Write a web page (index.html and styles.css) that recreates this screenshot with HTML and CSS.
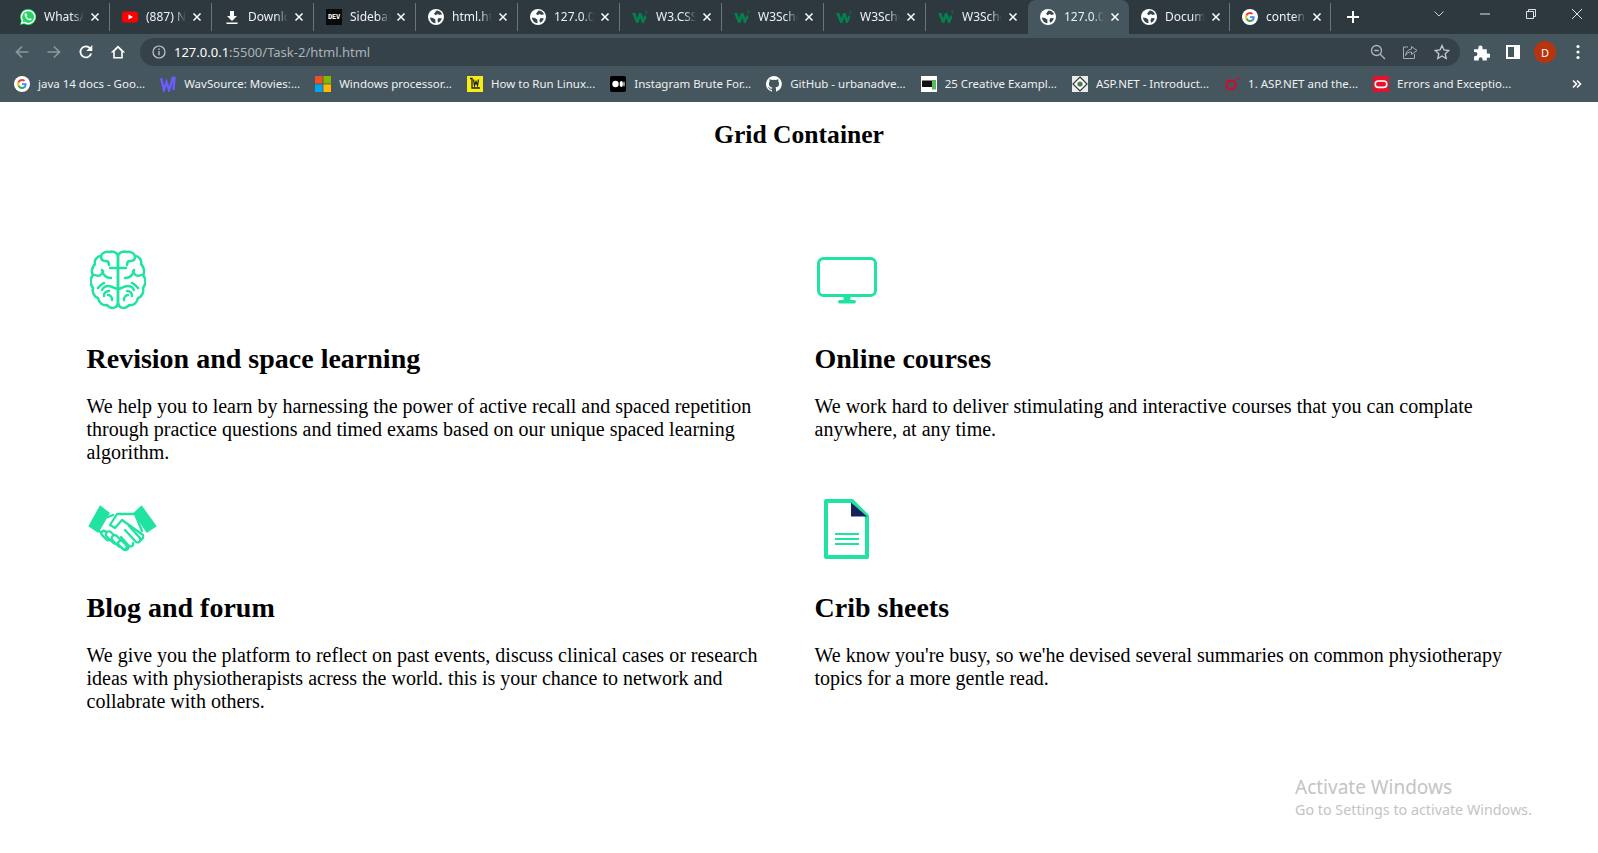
FILE: index.html
```html
<!DOCTYPE html>
<html lang="en">
<head>
<meta charset="utf-8">
<title>Grid Container</title>
<link rel="stylesheet" href="styles.css">
</head>
<body>
<svg class="defs" width="0" height="0" aria-hidden="true">
  <defs>
    <symbol id="globe" viewBox="0 0 16 16">
      <circle cx="8" cy="8" r="8" fill="#fff"/>
      <path d="M8.500 1.500c2.500 0 4.700 1.500 5.600 3.800L11.500 6 9.800 5 7.600 6.300 6 4.800zM2 8.500l3 .4 2.300 1.500.2 3.800C4.500 14.200 2.300 11.700 2 8.500zM10.500 9l3.200.2c-.4 2-1.700 3.700-3.500 4.500l-.8-2.500z" fill="#38464e"/>
    </symbol>
    <symbol id="google" viewBox="0 0 16 16">
      <circle cx="8" cy="8" r="8" fill="#fff"/>
      <path d="M12.600 8.200c0-.4 0-.7-.1-1H8v1.900h2.600c-.1.7-.5 1.200-1 1.600l1.600 1.200c.9-.9 1.400-2.200 1.400-3.700z" fill="#4285f4"/>
      <path d="M8 13c1.300 0 2.400-.4 3.200-1.200l-1.600-1.200c-.4.300-1 .5-1.600.5-1.300 0-2.300-.8-2.700-2L3.700 10.300C4.500 11.900 6.100 13 8 13z" fill="#34a853"/>
      <path d="M5.300 9.100c-.2-.7-.2-1.400 0-2.100L3.700 5.700c-.7 1.400-.7 3.200 0 4.600z" fill="#fbbc05"/>
      <path d="M8 4.900c.7 0 1.300.2 1.800.7l1.400-1.400C10.300 3.400 9.200 3 8 3 6.100 3 4.500 4.100 3.700 5.700L5.300 7c.4-1.200 1.400-2.100 2.700-2.100z" fill="#ea4335"/>
    </symbol>
    <symbol id="w3" viewBox="0 0 16 16">
      <path d="M0 4h3.500l1.500 5.500L7 4h2.400l2 5.500L12.500 6l2 2-2.700 6H10L8.200 8.800 6.300 14H4.200z" fill="#04804f"/>
      <path d="M13 2.200h2.200L14 3.500c.9.100 1.200 1.600-.3 2" fill="none" stroke="#04804f" stroke-width=".7"/>
    </symbol>
    <symbol id="close" viewBox="0 0 10 10">
      <path d="M1.500 1.500l7 7M8.500 1.500l-7 7" stroke="#fff" stroke-width="1.500" fill="none"/>
    </symbol>
  </defs>
</svg>

<header class="browser">
  <div class="strip">
    <div class="tab">
      <svg class="fav" viewBox="0 0 16 16"><path d="M8 0a8 8 0 0 0-6.900 12L0 16l4.100-1.100A8 8 0 1 0 8 0z" fill="#25d366"/><path d="M8 1.500a6.500 6.500 0 0 0-5.500 9.900l-.7 2.700 2.800-.7A6.500 6.500 0 1 0 8 1.500z" fill="#25d366" stroke="#fff" stroke-width="1.300"/><path d="M5.500 4.300c-.8.500-1.200 1.500-.6 2.900.8 1.900 2.400 3.600 4.300 4.100 1.300.4 2.300-.4 2.400-1.300l-1.600-.9-.9.800c-1-.4-2-1.400-2.500-2.500l.7-.8-.8-2z" fill="#fff"/></svg>
      <span class="tab-title">WhatsApp</span><svg class="x"><use href="#close"/></svg>
    </div>
    <div class="tab">
      <svg class="fav" viewBox="0 0 16 16"><rect y="2.500" width="16" height="11" rx="3" fill="#f00"/><path d="M6.500 5.500v5L11 8z" fill="#fff"/></svg>
      <span class="tab-title">(887) Netflix</span><svg class="x"><use href="#close"/></svg>
    </div>
    <div class="tab">
      <svg class="fav" viewBox="0 0 16 16"><path d="M6 2h4v5h3l-5 5-5-5h3zM2.500 13.500h11v1.500h-11z" fill="#fff"/></svg>
      <span class="tab-title">Downloads</span><svg class="x"><use href="#close"/></svg>
    </div>
    <div class="tab">
      <svg class="fav" viewBox="0 0 16 16"><rect width="16" height="16" fill="#0a0a0a"/></svg>
      <span class="dev">DEV</span>
      <span class="tab-title">Sidebar</span><svg class="x"><use href="#close"/></svg>
    </div>
    <div class="tab">
      <svg class="fav"><use href="#globe"/></svg>
      <span class="tab-title">html.html</span><svg class="x"><use href="#close"/></svg>
    </div>
    <div class="tab">
      <svg class="fav"><use href="#globe"/></svg>
      <span class="tab-title">127.0.0.1</span><svg class="x"><use href="#close"/></svg>
    </div>
    <div class="tab">
      <svg class="fav"><use href="#w3"/></svg>
      <span class="tab-title">W3.CSS</span><svg class="x"><use href="#close"/></svg>
    </div>
    <div class="tab">
      <svg class="fav"><use href="#w3"/></svg>
      <span class="tab-title">W3Schools</span><svg class="x"><use href="#close"/></svg>
    </div>
    <div class="tab">
      <svg class="fav"><use href="#w3"/></svg>
      <span class="tab-title">W3Schools</span><svg class="x"><use href="#close"/></svg>
    </div>
    <div class="tab before-active">
      <svg class="fav"><use href="#w3"/></svg>
      <span class="tab-title">W3Schools</span><svg class="x"><use href="#close"/></svg>
    </div>
    <div class="tab active narrow">
      <svg class="fav"><use href="#globe"/></svg>
      <span class="tab-title">127.0.0.1</span><svg class="x"><use href="#close"/></svg>
    </div>
    <div class="tab narrow">
      <svg class="fav"><use href="#globe"/></svg>
      <span class="tab-title">Document</span><svg class="x"><use href="#close"/></svg>
    </div>
    <div class="tab narrow">
      <svg class="fav"><use href="#google"/></svg>
      <span class="tab-title">content</span><svg class="x"><use href="#close"/></svg>
    </div>
    <svg class="newtab" viewBox="0 0 14 14"><path d="M7 1v12M1 7h12" stroke="#fff" stroke-width="2" fill="none"/></svg>
    <div class="win">
      <svg class="win-ico" viewBox="0 0 12 12"><path d="M1.500 3.500L6 8l4.500-4.500" stroke="#c9d0d4" fill="none"/></svg>
      <svg class="win-ico" viewBox="0 0 12 12"><path d="M1 6h10" stroke="#dfe3e5" fill="none"/></svg>
      <svg class="win-ico" viewBox="0 0 12 12"><path d="M1.500 3.500h7v7h-7zM3.500 3.500v-2h7v7h-2" stroke="#dfe3e5" fill="none"/></svg>
      <svg class="win-ico" viewBox="0 0 12 12"><path d="M1 1l10 10M11 1L1 11" stroke="#dfe3e5" fill="none"/></svg>
    </div>
  </div>

  <div class="toolbar">
    <svg class="nav" viewBox="0 0 16 16"><path d="M14.500 8H2.500M8 2.500L2.500 8 8 13.500" stroke="#8e999f" stroke-width="1.700" fill="none"/></svg>
    <svg class="nav" viewBox="0 0 16 16"><path d="M1.500 8h12M8 2.500L13.500 8 8 13.500" stroke="#8e999f" stroke-width="1.700" fill="none"/></svg>
    <svg class="nav" viewBox="0 0 16 16"><path d="M13.200 9.500A5.500 5.500 0 1 1 12 4.200" stroke="#fff" stroke-width="1.800" fill="none"/><path d="M14.300 1v6h-6z" fill="#fff"/></svg>
    <svg class="nav" viewBox="0 0 16 16"><path d="M8 1.500L.8 8.500h2.400v6h9.600v-6h2.400zM4.800 13V7.300L8 4l3.200 3.300V13z" fill="#fff"/></svg>
    <div class="omni">
      <svg class="info" viewBox="0 0 14 14"><circle cx="7" cy="7" r="6" stroke="#c3cacd" stroke-width="1.200" fill="none"/><path d="M7 6v4.200M7 3.500v1.400" stroke="#c3cacd" stroke-width="1.300"/></svg>
      <span class="url"><span class="host">127.0.0.1</span>:5500/Task-2/html.html</span>
      <svg class="omni-ico" viewBox="0 0 16 16"><circle cx="6.500" cy="6.500" r="5" stroke="#aeb6bb" stroke-width="1.300" fill="none"/><path d="M10.200 10.200l4.800 4.800M4.200 6.500h4.600" stroke="#aeb6bb" stroke-width="1.300"/></svg>
      <svg class="omni-ico" viewBox="0 0 16 16"><path d="M6 3H1.500v11.500h11V10M9.500 2.500L15 6.500l-5.500 4V8c-3 0-4.500 1-6 3.500C4 8 6 5.500 9.500 5z" stroke="#a3adb2" stroke-width="1" fill="none"/></svg>
      <svg class="omni-ico" viewBox="0 0 16 16"><path d="M8 1.500l2 4.500 4.800.5-3.600 3.200 1 4.800L8 12l-4.200 2.500 1-4.800L1.200 6.500 6 6z" stroke="#c3cacd" stroke-width="1.300" fill="none"/></svg>
    </div>
    <svg class="ext" viewBox="0 0 16 16"><path d="M1 5h4V3.500a2 2 0 0 1 4 0V5h4v4h1.500a2 2 0 0 1 0 4H13v2.500H9v-1.200a1.800 1.800 0 0 0-3.600 0v1.200H1v-4h1.200a2 2 0 0 0 0-4H1z" fill="#fff"/></svg>
    <svg class="panel" viewBox="0 0 14 14"><path d="M0 0h14v14H0z" fill="#fff"/><path d="M2 2h6v10H2z" fill="#46565f"/></svg>
    <span class="avatar">D</span>
    <svg class="dots" viewBox="0 0 4 16"><circle cx="2" cy="2.500" r="1.600" fill="#fff"/><circle cx="2" cy="8" r="1.600" fill="#fff"/><circle cx="2" cy="13.500" r="1.600" fill="#fff"/></svg>
  </div>

  <nav class="bookmarks">
    <a class="bm"><svg class="fav"><use href="#google"/></svg><span class="bm-text">java 14 docs - Goo...</span></a>
    <a class="bm"><svg class="fav" viewBox="0 0 16 16"><path d="M1 2l3 12 2.500-8L9 14l3-9 .5-3 2 0-1 12" stroke="#6a5cff" stroke-width="2.400" fill="none"/></svg><span class="bm-text">WavSource: Movies:...</span></a>
    <a class="bm"><svg class="fav" viewBox="0 0 16 16"><path d="M0 0h7.600v7.600H0z" fill="#f25022"/><path d="M8.400 0H16v7.600H8.400z" fill="#7fba00"/><path d="M0 8.400h7.600V16H0z" fill="#00a4ef"/><path d="M8.400 8.400H16V16H8.400z" fill="#ffb900"/></svg><span class="bm-text">Windows processor...</span></a>
    <a class="bm"><svg class="fav" viewBox="0 0 16 16"><rect width="16" height="16" fill="#f7ec13"/><path d="M3 2.500h2v9.500h8M6.500 3.500l1 6 1.500-4 1.500 4 1-6" stroke="#222" stroke-width="1.300" fill="none"/></svg><span class="bm-text">How to Run Linux...</span></a>
    <a class="bm"><svg class="fav" viewBox="0 0 16 16"><rect width="16" height="16" rx="2" fill="#000"/><circle cx="5.500" cy="8" r="3.200" fill="#fff"/><ellipse cx="11.300" cy="8" rx="1.600" ry="3" fill="#fff"/><ellipse cx="14" cy="8" rx=".6" ry="2.700" fill="#fff"/></svg><span class="bm-text">Instagram Brute For...</span></a>
    <a class="bm"><svg class="fav" viewBox="0 0 16 16"><path d="M8 0a8 8 0 0 0-2.500 15.600c.4.100.5-.2.500-.4v-1.400c-2.200.5-2.700-1-2.700-1-.4-.9-.9-1.200-.9-1.200-.7-.5.100-.5.100-.5.800.100 1.200.8 1.200.8.700 1.200 1.900.9 2.300.7.100-.5.300-.9.500-1.100-1.800-.2-3.600-.9-3.600-4 0-.9.300-1.600.8-2.100-.1-.2-.4-1 .1-2.100 0 0 .7-.2 2.200.8a7.600 7.600 0 0 1 4 0c1.500-1 2.200-.8 2.200-.8.500 1.100.2 1.900.1 2.100.5.600.8 1.300.8 2.100 0 3.100-1.900 3.700-3.700 3.900.3.300.6.800.6 1.500v2.200c0 .2.100.5.600.4A8 8 0 0 0 8 0z" fill="#fff"/></svg><span class="bm-text">GitHub - urbanadve...</span></a>
    <a class="bm"><svg class="fav" viewBox="0 0 16 16"><rect width="16" height="16" fill="#fff"/><rect x="1" y="4.500" width="14" height="6.500" fill="#111"/><rect x="11" y="4.500" width="4" height="9" fill="#5cb85c"/></svg><span class="bm-text">25 Creative Exampl...</span></a>
    <a class="bm"><svg class="fav" viewBox="0 0 16 16"><rect width="16" height="16" fill="#e9ecec"/><path d="M8 1l7 7-7 7-7-7z" fill="#fff" stroke="#333" stroke-width="1.200"/><circle cx="8" cy="8" r="2.600" fill="#4b7a4b"/></svg><span class="bm-text">ASP.NET - Introduct...</span></a>
    <a class="bm"><svg class="fav" viewBox="0 0 16 16"><circle cx="7" cy="9" r="4.500" stroke="#c8102e" stroke-width="2.400" fill="none"/><circle cx="14" cy="3" r="1.300" fill="#c8102e"/></svg><span class="bm-text">1. ASP.NET and the...</span></a>
    <a class="bm"><svg class="fav" viewBox="0 0 16 16"><rect width="16" height="16" fill="#e8112d"/><rect x="2.200" y="5" width="11.600" height="6.400" rx="3.200" stroke="#fff" stroke-width="1.600" fill="none"/></svg><span class="bm-text">Errors and Exceptio...</span></a>
    <svg class="more" viewBox="0 0 10 10"><path d="M1 1.500L4.500 5 1 8.500M5 1.500L8.500 5 5 8.500" stroke="#fff" stroke-width="1.600" fill="none"/></svg>
  </nav>
</header>

<main class="page">
  <h1 class="page-title">Grid Container</h1>
  <section class="grid">
    <article class="card">
      <div class="icon-box">
        <svg class="brain" viewBox="0 0 56 60">
          <g id="half" fill="none" stroke="#20e3a2" stroke-width="2.500" stroke-linecap="round" stroke-linejoin="round">
            <path d="M28 5C26 2 22 1 19 2C16 1 12 3 11 6C7 6 4 10 5 14C2 17 1 22 3 25C0 29 0 34 3 38C2 42 4 47 8 48C9 53 13 56 17 55C20 59 26 59 28 54"/>
            <path d="M28 5V54M28 18H20M28 39C25 39 23 36 18 36C15 36 13 38 12 40M5 25C9 27 12 25 13 21M16 11C18 11 19 13 19 15M11 6C11 9 12 11 15 11M12 20C13 25 16 28 21 28M14 46C14 43 16 41 19 41M22 50C22 47 20 45 18 45M8 38C10 36 11 34 14 33"/>
          </g>
          <use href="#half" transform="matrix(-1 0 0 1 56 0)"/>
        </svg>
      </div>
      <h2 class="card-title">Revision and space learning</h2>
      <p class="card-text">We help you to learn by harnessing the power of active recall and spaced repetition through practice questions and timed exams based on our unique spaced learning algorithm.</p>
    </article>
    <article class="card">
      <div class="icon-box">
        <svg class="monitor" viewBox="0 0 60 47">
          <rect x="1.500" y="1.500" width="57" height="37" rx="5" fill="none" stroke="#20e3a2" stroke-width="3"/>
          <path d="M26.500 39h7v4h-7z" fill="#20e3a2"/>
          <rect x="21" y="43" width="18" height="3.500" rx="1.700" fill="#20e3a2"/>
        </svg>
      </div>
      <h2 class="card-title">Online courses</h2>
      <p class="card-text">We work hard to deliver stimulating and interactive courses that you can complate anywhere, at any time.</p>
    </article>
    <article class="card">
      <div class="icon-box">
        <svg class="hands" viewBox="0 0 69 49">
          <g fill="none" stroke="#20e3a2" stroke-width="2.300" stroke-linecap="round" stroke-linejoin="round">
            <path d="M20 12L25 10M46 9H29L22 20L27 23L34 15L55 30C56 33 54 35 52 35"/>
            <path d="M47 9L54 26M11 26L14 28"/>
            <path d="M41 21L53 34C53 37 50 38 48 37L37 25M45 38C46 41 43 42 41 41L33 32M41 42C40 45 37 46 35 44L31 40"/>
            <rect x="15.500" y="25" width="5" height="11" rx="2.500" transform="rotate(-45 18 30.500)" fill="#fff"/>
            <rect x="21" y="25" width="6" height="15" rx="3" transform="rotate(-45 24 32.500)" fill="#fff"/>
            <rect x="26.500" y="29" width="6" height="14" rx="3" transform="rotate(-45 29.500 36)" fill="#fff"/>
            <rect x="32" y="35" width="5" height="10" rx="2.500" transform="rotate(-45 34.500 40)" fill="#fff"/>
          </g>
          <path d="M12 .3L22 8 10.300 28 .3 21.300zM53.700 .3L68.700 21.300 58.700 28 45.300 8z" fill="#20e3a2"/>
        </svg>
      </div>
      <h2 class="card-title">Blog and forum</h2>
      <p class="card-text">We give you the platform to reflect on past events, discuss clinical cases or research ideas with physiotherapists acress the world. this is your chance to network and collabrate with others.</p>
    </article>
    <article class="card">
      <div class="icon-box">
        <svg class="doc" viewBox="0 0 45 60">
          <path d="M28 2H2v56h41V17z" fill="none" stroke="#20e3a2" stroke-width="4" stroke-linejoin="round"/>
          <path d="M27 3.500L43 17.500H27z" fill="#1a1f5e"/>
          <path d="M11 35h24M11 40h24M11 45h24" stroke="#20e3a2" stroke-width="2"/>
        </svg>
      </div>
      <h2 class="card-title">Crib sheets</h2>
      <p class="card-text">We know you're busy, so we'he devised several summaries on common physiotherapy topics for a more gentle read.</p>
    </article>
  </section>
</main>

<aside class="activate">
  <div class="activate-head">Activate Windows</div>
  <div class="activate-sub">Go to Settings to activate Windows.</div>
</aside>
</body>
</html>
```

FILE: styles.css
```css
* { box-sizing: border-box; }
html, body { margin: 0; padding: 0; }
body {
  width: 1598px;
  height: 853px;
  overflow: hidden;
  background: #fff;
  color: #000;
  font-family: "Liberation Serif", "Times New Roman", serif;
  position: relative;
}
.defs { position: absolute; }

.browser { font-family: "Noto Sans", "Open Sans", sans-serif; color: #fff; }

.strip {
  height: 34px;
  background: #2e383f;
  padding-left: 8px;
  display: flex;
  align-items: stretch;
}
.tab {
  width: 102px;
  display: flex;
  align-items: center;
  padding-left: 12px;
  font-size: 12px;
  position: relative;
  border-right: 1px solid #6a7479;
  height: 28px;
  align-self: center;
}
.tab.narrow { width: 101px; }
.tab.before-active { border-right-color: transparent; }
.tab.active {
  height: 34px;
  background: #46565f;
  border-right-color: transparent;
  border-radius: 8px 8px 0 0;
  align-self: flex-end;
}
.fav { width: 16px; height: 16px; flex: none; }
.dev {
  position: absolute;
  left: 12px;
  width: 16px;
  text-align: center;
  font: bold 7px "DejaVu Sans Mono", monospace;
  letter-spacing: -.2px;
}
.tab-title {
  margin-left: 8px;
  padding-bottom: 2px;
  width: 40px;
  white-space: nowrap;
  overflow: hidden;
  -webkit-mask-image: linear-gradient(to right, #000 70%, transparent);
  mask-image: linear-gradient(to right, #000 70%, transparent);
  color: #eef1f2;
}
.x { width: 10px; height: 10px; margin-left: 6px; flex: none; }
.newtab { width: 14px; height: 14px; margin: 10px 0 0 15px; }
.win {
  margin-left: auto;
  display: flex;
  height: 28px;
  align-items: center;
  padding-right: 15px;
  gap: 34px;
}
.win-ico { width: 12px; height: 12px; }

.toolbar {
  height: 32px;
  background: #46565f;
  padding: 4px 11px 0 14px;
  display: flex;
  align-items: center;
}
.nav { width: 16px; height: 16px; margin-right: 16px; flex: none; }
.omni {
  width: 1320px;
  height: 28px;
  margin-left: -2px;
  border-radius: 14px;
  background: #36424a;
  display: flex;
  align-items: center;
  padding: 0 10px 0 12px;
  font-size: 13px;
}
.info { width: 14px; height: 14px; margin-right: 8px; }
.url { color: #aab3b8; flex: 1; padding-bottom: 1px; }
.host { color: #fff; }
.omni-ico { width: 16px; height: 16px; margin-left: 16px; }
.ext { width: 17px; height: 17px; margin-left: 13px; }
.panel { width: 14px; height: 14px; margin-left: 16px; }
.avatar {
  width: 22px;
  height: 22px;
  margin-left: 14px;
  border-radius: 50%;
  background: #b8340c;
  font-size: 11px;
  display: flex;
  align-items: center;
  justify-content: center;
}
.dots { width: 4px; height: 16px; margin-left: 20px; }

.bookmarks {
  height: 36px;
  background: #46565f;
  padding-left: 14px;
  display: flex;
  align-items: center;
  font-size: 11.500px;
  white-space: nowrap;
}
.bm { display: flex; align-items: center; gap: 8px; margin-right: 15px; color: #eef1f2; }
.bm-text { padding-bottom: 2px; }
.more { width: 10px; height: 10px; margin-left: auto; margin-right: 16px; }

.page { padding-top: 19px; }
.page-title {
  margin: 0 0 96px;
  font-size: 25.600px;
  line-height: 28px;
  font-weight: bold;
  text-align: center;
}
.grid {
  display: grid;
  grid-template-columns: 728px 728px;
  row-gap: 30px;
  padding-left: 86.500px;
}
.card { padding-right: 28px; }
.icon-box { height: 70px; display: flex; align-items: center; }
.brain { width: 56px; height: 60px; margin-left: 3px; }
.monitor { width: 60px; height: 47px; margin-left: 2px; }
.hands { width: 69px; height: 49px; margin-left: 1px; }
.doc { width: 45px; height: 60px; margin-left: 9px; }
.card-title {
  margin: 28px 0 20px;
  font-size: 28px;
  line-height: 32px;
  font-weight: bold;
}
.card-text {
  margin: 0;
  font-size: 20px;
  line-height: 23px;
}

.activate {
  position: absolute;
  left: 1295px;
  top: 773px;
  font-family: "Noto Sans", "Open Sans", sans-serif;
  color: #c4c4c4;
}
.activate-head { font-size: 19px; line-height: 28px; }
.activate-sub { font-size: 14.300px; line-height: 18px; }
```
